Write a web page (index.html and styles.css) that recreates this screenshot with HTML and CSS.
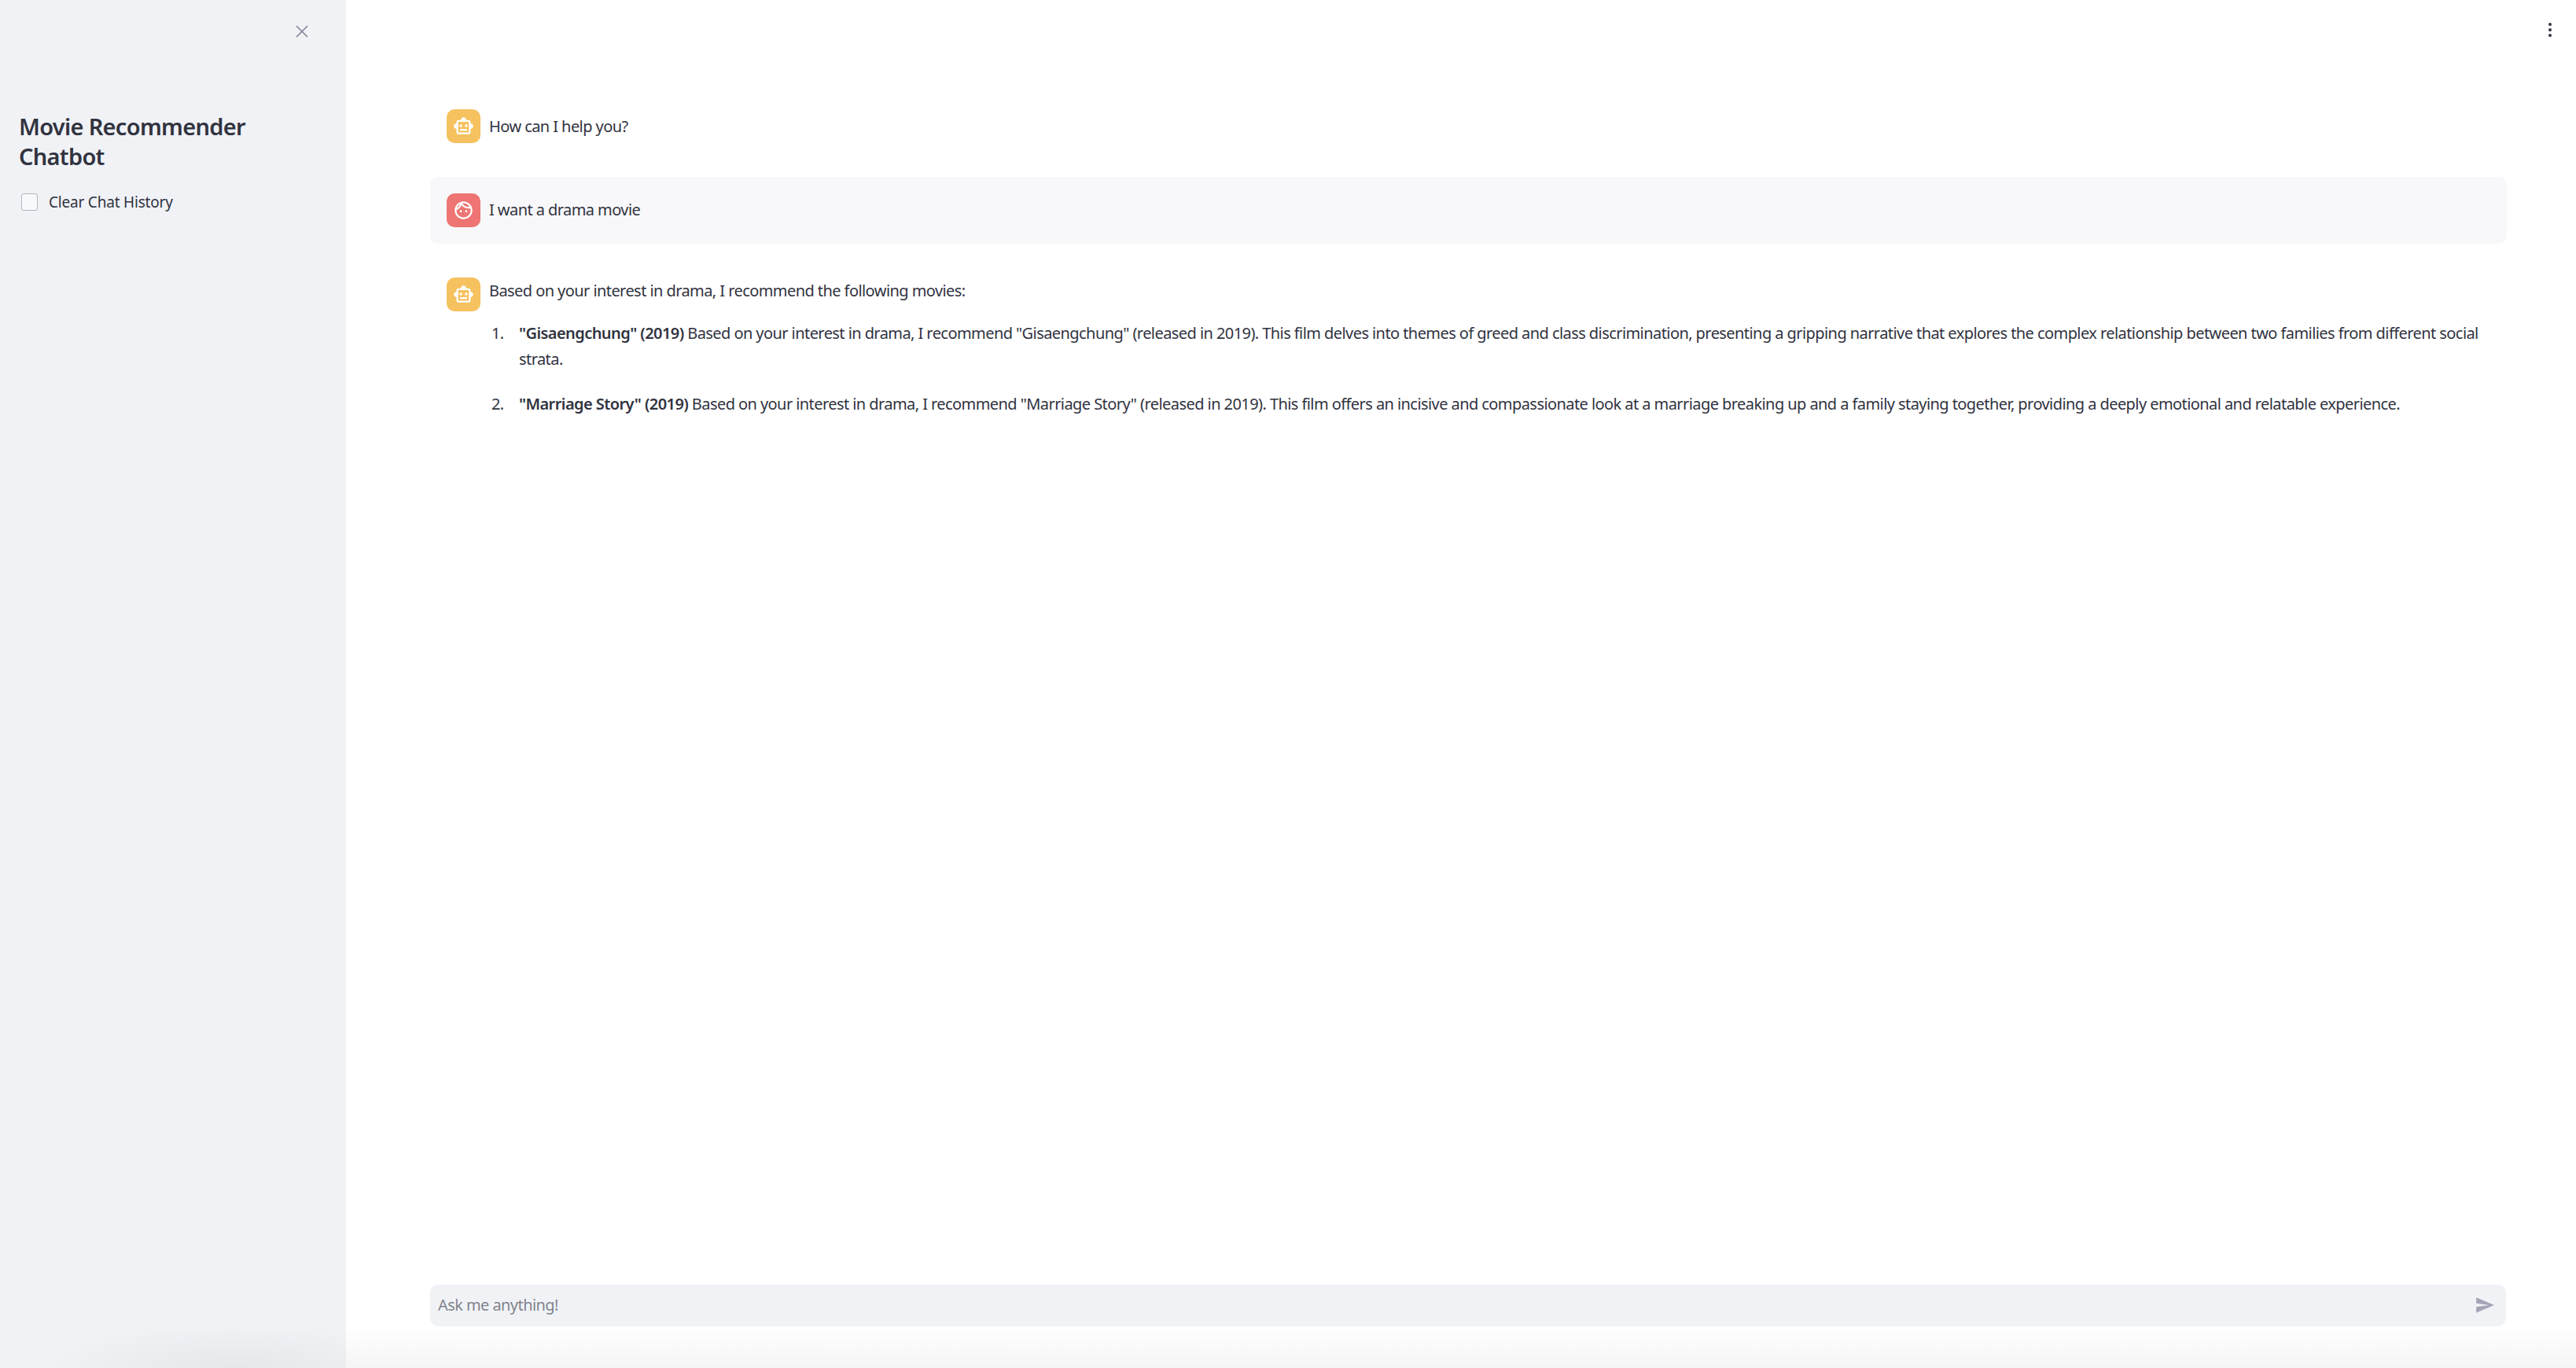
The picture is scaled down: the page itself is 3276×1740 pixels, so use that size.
FILE: index.html
```html
<!DOCTYPE html>
<html lang="en">
    <head>
        <meta charset="UTF-8">
        <meta name="viewport" content="width=device-width, initial-scale=1.0">
        <title>Movie Recommender Chatbot</title>
        <link rel="stylesheet" href="styles.css">
    </head>
    <body>
        <aside class="sidebar">
            <div class="sidebar-top">
                <button class="icon-button close-button" aria-label="Close sidebar">
                    <svg viewBox="0 0 16 16" width="16" height="16"><path d="M1 1l14 14M15 1L1 15"/></svg>
                </button>
            </div>
            <h2 class="sidebar-title">Movie Recommender Chatbot</h2>
            <label class="clear-option">
                <span class="checkbox"></span>
                <span>Clear Chat History</span>
            </label>
        </aside>

        <main class="main">
            <div class="toolbar">
                <button class="icon-button menu-button" aria-label="Menu">
                    <span class="dot"></span>
                    <span class="dot"></span>
                    <span class="dot"></span>
                </button>
            </div>

            <section class="messages">
                <div class="message message-short">
                    <div class="avatar avatar-bot">
                        <svg viewBox="0 0 24 24"><path d="M20 9V7c0-1.1-.9-2-2-2h-3c0-1.66-1.34-3-3-3S9 3.34 9 5H6c-1.1 0-2 .9-2 2v2c-1.66 0-3 1.34-3 3s1.34 3 3 3v4c0 1.1.9 2 2 2h12c1.1 0 2-.9 2-2v-4c1.66 0 3-1.34 3-3s-1.34-3-3-3zm-2 10H6V7h12v12zm-9-6c-.83 0-1.5-.67-1.5-1.5S8.17 10 9 10s1.5.67 1.5 1.5S9.83 13 9 13zm7.5-1.5c0 .83-.67 1.5-1.5 1.5s-1.5-.67-1.5-1.5S14.17 10 15 10s1.5.67 1.5 1.5zM8 15h8v2H8v-2z"/></svg>
                    </div>
                    <div class="message-body"><p>How can I help you?</p></div>
                </div>

                <div class="message message-short message-user">
                    <div class="avatar avatar-user">
                        <svg viewBox="0 0 24 24"><path d="M10.25 13c0 .69-.56 1.25-1.25 1.25S7.75 13.69 7.75 13s.56-1.25 1.25-1.25 1.25.56 1.25 1.25zM15 11.75c-.69 0-1.25.56-1.25 1.25s.56 1.25 1.25 1.25 1.25-.56 1.25-1.25-.56-1.25-1.25-1.25zm7 .25c0 5.52-4.48 10-10 10S2 17.52 2 12 6.48 2 12 2s10 4.48 10 10zM10.66 4.12C12.06 6.44 14.6 8 17.5 8c.46 0 .91-.05 1.34-.12C17.44 5.56 14.9 4 12 4c-.46 0-.91.05-1.34.12zM4.42 9.47c1.71-.97 3.03-2.55 3.66-4.44C6.37 6 5.05 7.58 4.42 9.47zM20 12c0-.78-.12-1.53-.33-2.24-.7.15-1.42.24-2.17.24-3.13 0-5.92-1.44-7.76-3.69C8.69 8.87 6.6 10.88 4 11.86c.01.04 0 .09 0 .14 0 4.41 3.59 8 8 8s8-3.59 8-8z"/></svg>
                    </div>
                    <div class="message-body"><p>I want a drama movie</p></div>
                </div>

                <div class="message">
                    <div class="avatar avatar-bot">
                        <svg viewBox="0 0 24 24"><path d="M20 9V7c0-1.1-.9-2-2-2h-3c0-1.66-1.34-3-3-3S9 3.34 9 5H6c-1.1 0-2 .9-2 2v2c-1.66 0-3 1.34-3 3s1.34 3 3 3v4c0 1.1.9 2 2 2h12c1.1 0 2-.9 2-2v-4c1.66 0 3-1.34 3-3s-1.34-3-3-3zm-2 10H6V7h12v12zm-9-6c-.83 0-1.5-.67-1.5-1.5S8.17 10 9 10s1.5.67 1.5 1.5S9.83 13 9 13zm7.5-1.5c0 .83-.67 1.5-1.5 1.5s-1.5-.67-1.5-1.5S14.17 10 15 10s1.5.67 1.5 1.5zM8 15h8v2H8v-2z"/></svg>
                    </div>
                    <div class="message-body">
                        <p>Based on your interest in drama, I recommend the following movies:</p>
                        <ol>
                            <li><strong>"Gisaengchung" (2019)</strong> Based on your interest in drama, I recommend "Gisaengchung" (released in 2019). This film delves into themes of greed and class discrimination, presenting a gripping narrative that explores the complex relationship between two families from different social strata.</li>
                            <li><strong>"Marriage Story" (2019)</strong> Based on your interest in drama, I recommend "Marriage Story" (released in 2019). This film offers an incisive and compassionate look at a marriage breaking up and a family staying together, providing a deeply emotional and relatable experience.</li>
                        </ol>
                    </div>
                </div>
            </section>

            <div class="input-bar">
                <form class="chat-input">
                    <input type="text" placeholder="Ask me anything!">
                    <button type="button" class="icon-button send-button" aria-label="Send">
                        <svg viewBox="0 0 24 24"><path d="M2.01 21L23 12 2.01 3 2 10l15 2-15 2z"/></svg>
                    </button>
                </form>
            </div>
        </main>
    </body>
</html>
```

FILE: styles.css
```css
* {
    box-sizing: border-box;
}
html, body {
    height: 100%;
}
body {
    margin: 0;
    display: flex;
    height: 1740px;
    overflow: hidden;
    font-family: "Noto Sans", "Open Sans", sans-serif;
    font-size: 20px;
    line-height: 33.6px;
    letter-spacing: -0.57px;
    color: #31333f;
    background-color: white;
}
.icon-button {
    display: flex;
    padding: 0;
    border: none;
    background: none;
    cursor: pointer;
}
.sidebar {
    flex: 0 0 440px;
    padding: 0 24px;
    background-color: #f0f2f6;
    background-image: radial-gradient(ellipse 240px 55px at 300px 100%, #e6e7ea, rgba(230, 231, 234, 0));
}
.sidebar-top {
    display: flex;
    justify-content: flex-end;
    height: 142px;
    padding: 32px 24px 0 0;
}
.close-button svg {
    fill: none;
    stroke: #808495;
    stroke-width: 1.6;
}
.sidebar-title {
    margin: 0;
    font-size: 29px;
    font-weight: 600;
    line-height: 38px;
    letter-spacing: -0.7px;
}
.clear-option {
    display: flex;
    align-items: center;
    gap: 14px;
    margin-top: 28px;
    padding-left: 3px;
    font-size: 19px;
    line-height: 22px;
    letter-spacing: -0.2px;
}
.checkbox {
    width: 21px;
    height: 22px;
    background-color: #f8f9fb;
    border: 1px solid #b5b6be;
    border-radius: 3px;
}
.main {
    flex: 1;
    display: flex;
    flex-direction: column;
    min-width: 0;
}
.toolbar {
    display: flex;
    justify-content: flex-end;
    height: 118px;
    padding: 29px 31px 0 0;
}
.menu-button {
    flex-direction: column;
    gap: 3px;
}
.dot {
    width: 4px;
    height: 4px;
    border-radius: 50%;
    background-color: #31333f;
}
.messages {
    flex: 1;
    display: flex;
    flex-direction: column;
    gap: 22px;
    padding: 0 88px 0 107px;
}
.message {
    display: flex;
    align-items: flex-start;
    gap: 11px;
    padding: 21px;
    border-radius: 10px;
}
.message-short {
    align-items: center;
}
.message-user {
    background-color: #f8f8fb;
}
.avatar {
    flex: 0 0 43px;
    display: flex;
    align-items: center;
    justify-content: center;
    height: 43px;
    border-radius: 10px;
}
.avatar svg {
    width: 27px;
    height: 27px;
    fill: white;
}
.avatar-bot {
    background-color: #f6c15f;
}
.avatar-user {
    background-color: #ee7573;
}
.message-body {
    flex: 1;
    min-width: 0;
}
.message-body p {
    margin: 0;
}
.message-user .message-body p {
    margin-bottom: 1px;
}
.message-body ol {
    margin: 20px 0 0;
    padding-left: 38px;
}
.message-body li {
    margin-bottom: 23px;
}
.message-body li::marker {
    content: counter(list-item) ".\2003";
}
.message-body li:last-child {
    margin-bottom: 0;
}
.message-body strong {
    font-weight: 600;
}
.input-bar {
    padding: 0 89px 53px 107px;
    background-image: linear-gradient(to bottom, white 0, white 53px, #f5f5f5 106px);
}
.chat-input {
    display: flex;
    align-items: center;
    height: 53px;
    padding: 0 14px 2px 10px;
    background-color: #f0f2f6;
    border-radius: 10px;
}
.chat-input input {
    flex: 1;
    padding: 0;
    border: none;
    outline: none;
    background: none;
    font-family: inherit;
    font-size: 20px;
    letter-spacing: -0.57px;
    color: #31333f;
}
.chat-input input::placeholder {
    color: rgba(49, 51, 63, 0.6);
}
.send-button svg {
    width: 26px;
    height: 26px;
    fill: #a3a5b6;
}
```
